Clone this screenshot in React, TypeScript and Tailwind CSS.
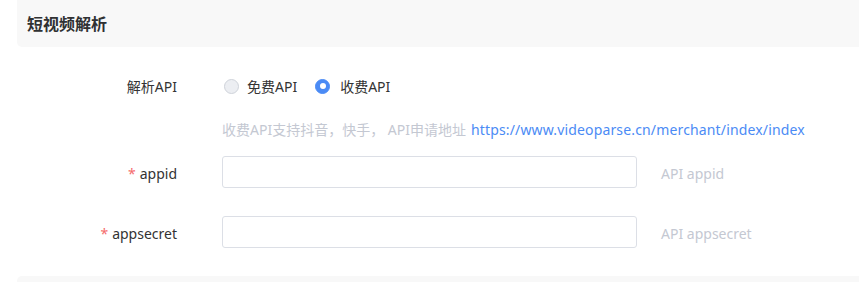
import { useState } from "react";

const font = { fontFamily: '"Noto Sans", "Noto Sans CJK SC", sans-serif' };

export default function App() {
    const [mode, setMode] = useState("paid");

    return (
        <div className="w-[859px] h-[282px] overflow-hidden bg-white pl-[17px] text-[14px] text-[#333]" style={font}>
            {/* section header */}
            <div className="h-[47px] -mr-[6px] bg-[#f8f8f8] rounded-b-[5px] flex items-center pl-[10px]">
                <h2 className="text-[16px] font-bold text-[#303133]">短视频解析</h2>
            </div>

            {/* api type */}
            <div className="mt-[23px] h-8 flex items-center">
                <label className="w-[160px] text-right">解析API</label>
                <div className="ml-[45px] flex items-center">
                    <button onClick={() => setMode("free")} className="flex items-center">
                        <span className={`${mode === "free" ? "bg-[#4b8bf5] border-[#4b8bf5]" : "bg-[#eceef2] border-[#cfd3da]"} w-[15px] h-[15px] rounded-full border flex items-center justify-center ml-[2px]`}>
                            {mode === "free" && <span className="w-[6px] h-[6px] rounded-full bg-white" />}
                        </span>
                        <span className="ml-[8px]">免费API</span>
                    </button>
                    <button onClick={() => setMode("paid")} className="flex items-center ml-[18px]">
                        <span className={`${mode === "paid" ? "bg-[#4b8bf5] border-[#4b8bf5]" : "bg-[#eceef2] border-[#cfd3da]"} w-[15px] h-[15px] rounded-full border flex items-center justify-center`}>
                            {mode === "paid" && <span className="w-[6px] h-[6px] rounded-full bg-white" />}
                        </span>
                        <span className="ml-[10px]">收费API</span>
                    </button>
                </div>
            </div>

            {/* tip */}
            <div className="mt-[17px] h-5 flex items-center pl-[205px] whitespace-nowrap">
                <span className="text-[#c4c8d2]">收费API支持抖音，快手， API申请地址</span>
                <a href="#" className="ml-[5px] text-[#4b8bf5] tracking-[0.15px]">https://www.videoparse.cn/merchant/index/index</a>
            </div>

            {/* appid */}
            <div className="mt-[17px] h-8 flex items-center">
                <label className="w-[160px] text-right pt-[3px]"><span className="text-[#f56c6c] mr-[4px]">*</span>appid</label>
                <input className="ml-[45px] w-[415px] h-8 border border-[#dcdfe6] rounded-[3px] px-3 outline-none" />
                <span className="ml-[24px] pt-[3px] text-[#c4c8d2]">API appid</span>
            </div>

            {/* appsecret */}
            <div className="mt-[28px] h-8 flex items-center">
                <label className="w-[160px] text-right pt-[3px]"><span className="text-[#f56c6c] mr-[4px]">*</span>appsecret</label>
                <input className="ml-[45px] w-[415px] h-8 border border-[#dcdfe6] rounded-[3px] px-3 outline-none" />
                <span className="ml-[24px] pt-[3px] text-[#c4c8d2]">API appsecret</span>
            </div>

            {/* next section */}
            <div className="mt-[28px] h-5 -mr-[6px] bg-[#f8f8f8] rounded-t-[5px]" />
        </div>
    );
}
